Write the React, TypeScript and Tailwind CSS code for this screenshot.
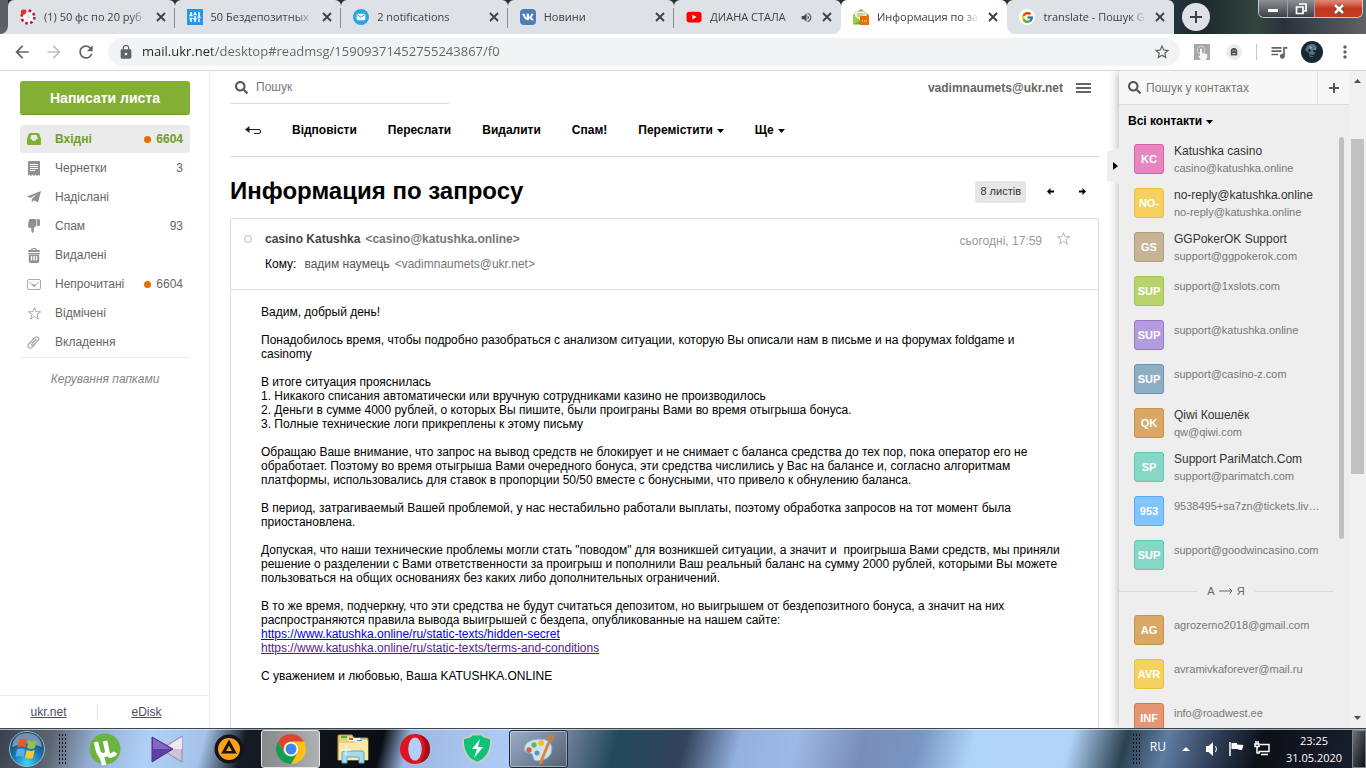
import type { ReactNode } from "react";
import clsx from "clsx";
import { FaSearch, FaVk } from "react-icons/fa";
import { FcGoogle } from "react-icons/fc";
import {
  MdArrowBack,
  MdArrowForward,
  MdLock,
  MdMoreVert,
  MdQueueMusic,
  MdRefresh,
  MdStarBorder,
  MdVolumeUp,
} from "react-icons/md";

type Tab = { title: string; icon: ReactNode; active?: boolean; audio?: boolean; edge?: string };

const tabs: Tab[] = [
  { title: "(1) 50 фс по 20 руб", icon: <ChipIcon /> },
  { title: "50 Бездепозитных", icon: <SlidersIcon /> },
  { title: "2 notifications", icon: <MailBadgeIcon /> },
  {
    title: "Новини",
    icon: (
      <span className="flex size-4 items-center justify-center rounded-sm bg-[#4d7db8] text-white">
        <FaVk size={12} />
      </span>
    ),
  },
  { title: "ДИАНА СТАЛА", icon: <YoutubeIcon />, audio: true, edge: "rounded-br-lg" },
  { title: "Информация по за", icon: <UkrMailIcon />, active: true },
  {
    title: "translate - Пошук G",
    icon: (
      <span className="flex size-4 items-center justify-center rounded-full bg-white">
        <FcGoogle size={13} />
      </span>
    ),
    edge: "rounded-bl-lg",
  },
];

const folders = [
  { label: "Вхідні", count: "6604", dot: true, active: true, icon: <InboxIcon /> },
  { label: "Чернетки", count: "3", icon: <DraftIcon /> },
  { label: "Надіслані", icon: <PlaneIcon /> },
  { label: "Спам", count: "93", icon: <ThumbIcon /> },
  { label: "Видалені", icon: <TrashIcon /> },
  { label: "Непрочитані", count: "6604", dot: true, icon: <UnreadIcon /> },
  { label: "Відмічені", icon: <StarIcon className="size-[15px] text-[#aaabad]" /> },
  { label: "Вкладення", icon: <ClipIcon /> },
];

const contacts = [
  { initials: "KC", name: "Katushka casino", email: "casino@katushka.online", color: "bg-[#e886c0] border-[#dd5cab]" },
  { initials: "NO-", name: "no-reply@katushka.online", email: "no-reply@katushka.online", color: "bg-[#f5d15f] border-[#efc132]" },
  { initials: "GS", name: "GGPokerOK Support", email: "support@ggpokerok.com", color: "bg-[#c7b497] border-[#b39b78]" },
  { initials: "SUP", email: "support@1xslots.com", color: "bg-[#b9d36c] border-[#a3c744]" },
  { initials: "SUP", email: "support@katushka.online", color: "bg-[#b59ddd] border-[#9575ce]" },
  { initials: "SUP", email: "support@casino-z.com", color: "bg-[#8eaec4] border-[#6994b4]" },
  { initials: "QK", name: "Qiwi Кошелёк", email: "qw@qiwi.com", color: "bg-[#d9a866] border-[#cb923f]" },
  { initials: "SP", name: "Support PariMatch.Com", email: "support@parimatch.com", color: "bg-[#86d7c5] border-[#59c9af]" },
  { initials: "953", email: "9538495+sa7zn@tickets.liv…", color: "bg-[#84c4fe] border-[#52acfb]" },
  { initials: "SUP", email: "support@goodwincasino.com", color: "bg-[#86d7c5] border-[#59c9af]" },
];

const moreContacts = [
  { initials: "AG", email: "agrozerno2018@gmail.com", color: "bg-[#d9a866] border-[#cb923f]" },
  { initials: "AVR", email: "avramivkaforever@mail.ru", color: "bg-[#f5d15f] border-[#efc132]" },
  { initials: "INF", email: "info@roadwest.ee", color: "bg-[#e59674] border-[#dc7448]" },
];

const bodyStart = `Вадим, добрый день!

Понадобилось время, чтобы подробно разобраться с анализом ситуации, которую Вы описали нам в письме и на форумах foldgame и
casinomy

В итоге ситуация прояснилась
1. Никакого списания автоматически или вручную сотрудниками казино не производилось
2. Деньги в сумме 4000 рублей, о которых Вы пишите, были проиграны Вами во время отыгрыша бонуса.
3. Полные технические логи прикреплены к этому письму

Обращаю Ваше внимание, что запрос на вывод средств не блокирует и не снимает с баланса средства до тех пор, пока оператор его не
обработает. Поэтому во время отыгрыша Вами очередного бонуса, эти средства числились у Вас на балансе и, согласно алгоритмам
платформы, использовались для ставок в пропорции 50/50 вместе с бонусными, что привело к обнулению баланса.

В период, затрагиваемый Вашей проблемой, у нас нестабильно работали выплаты, поэтому обработка запросов на тот момент была
приостановлена.

Допуская, что наши технические проблемы могли стать "поводом" для возникшей ситуации, а значит и  проигрыша Вами средств, мы приняли
решение о разделении с Вами ответственности за проигрыш и пополнили Ваш реальный баланс на сумму 2000 рублей, которыми Вы можете
пользоваться на общих основаниях без каких либо дополнительных ограничений.

В то же время, подчеркну, что эти средства не будут считаться депозитом, но выигрышем от бездепозитного бонуса, а значит на них
распространяются правила вывода выигрышей с бездепа, опубликованные на нашем сайте:
`;

/* ---------- icons ---------- */

function ChipIcon() {
  return (
    <svg viewBox="0 0 16 16" className="size-4">
      <circle cx="8" cy="8" r="6.4" fill="#fff" stroke="#eee" strokeWidth="2.6" />
      <circle cx="8" cy="8" r="6.4" fill="none" stroke="#b81d35" strokeWidth="2.6" strokeDasharray="2.6 2.4" />
      <path d="M8 5v3l2 1" stroke="#ccc" fill="none" />
      <circle cx="3.4" cy="3" r="2.6" fill="#ed2b23" />
    </svg>
  );
}

function SlidersIcon() {
  return (
    <svg viewBox="0 0 16 16" className="size-4">
      <path fill="#2196f3" d="M0 0h16v16H0z" />
      <path d="M4 3v4M4 9v4M8 3v2M8 7v6M12 3v5M12 10v3M2.4 9.500h3.200M6.400 5.500h3.200M10.400 8.500h3.200M2.400 6.500h3.200M6.400 10h3.200" stroke="#fff" strokeWidth="1.500" />
    </svg>
  );
}

function MailBadgeIcon() {
  return (
    <svg viewBox="0 0 16 16" className="size-4">
      <circle cx="8" cy="8" r="8" fill="#2ca5e0" />
      <rect x="3.700" y="4.800" width="8.600" height="6.500" rx="1" fill="#fff" />
      <path d="m4 5.500 4 2.800 4-2.800" fill="none" stroke="#2ca5e0" />
    </svg>
  );
}

function YoutubeIcon() {
  return (
    <svg viewBox="0 0 16 16" className="size-4">
      <rect x=".5" y="2.800" width="15" height="10.600" rx="2.800" fill="#f00" />
      <path fill="#fff" d="m6.400 5.700 4.200 2.400-4.200 2.400z" />
    </svg>
  );
}

function UkrMailIcon() {
  return (
    <svg viewBox="0 0 16 16" className="size-4">
      <path fill="#7ab32e" d="M0 6 8 0l8 6v9.500H0z" />
      <path fill="#f4f2e4" stroke="#d8d5be" strokeWidth=".5" d="M2 2.500h11.500V10L8 12 2 9z" />
      <path d="M4 5h8M4 7h6" stroke="#9bb46a" />
      <path fill="#9bcf4a" d="m0 6 7 5-7 4.500z" />
      <path fill="#ec6c04" d="M7 7h9v9H7z" />
      <path d="M9 12h1M11 12h1M13 12h1" stroke="#fff" />
    </svg>
  );
}

function InboxIcon() {
  return (
    <svg viewBox="0 0 14 12" className="h-3 w-3.5">
      <path fill="#7cb22e" fillRule="evenodd" d="M3.500 0h7Q12 0 12.500 1.500L14 6v4.500q0 1.500-1.500 1.500h-11Q0 12 0 10.500V6l1.500-4.500Q2 0 3.500 0zM4.300 2 3 6h1.500q.4 2 2.500 2t2.500-2H11L9.700 2z" />
    </svg>
  );
}

function DraftIcon() {
  return (
    <svg viewBox="0 0 12 15" className="ml-px h-[15px] w-3">
      <path fill="#8f9094" d="M1 0h10q1 0 1 1v14l-1.500-1.500L9 15l-1.500-1.500L6 15l-1.500-1.500L3 15l-1.500-1.500L0 15V1q0-1 1-1z" />
      <path d="M2 3.500h8M2 5.500h8M2 7.500h8M2 9.500h5" stroke="#fff" />
    </svg>
  );
}

function PlaneIcon() {
  return (
    <svg viewBox="0 0 14 12" className="h-3 w-3.5">
      <path fill="#8f9094" d="M14 0 0 5.500l3.300 1.600L10 3 4.800 8v3.600l2-2.300L11 11.500z" />
    </svg>
  );
}

function ThumbIcon() {
  return (
    <svg viewBox="0 0 12 14" className="ml-px h-3.5 w-3">
      <path fill="#8f9094" d="M1 .5Q1.500 0 2.500 0H7q1 0 1.500 1v5.500L5.800 9.200Q6 14 4.300 14 3 14 3.400 9H1Q-.4 8.500.2 5zM9.200 0h1.300q1.500 0 1.500 1.500V6q0 1-1 1H9.200z" />
    </svg>
  );
}

function TrashIcon() {
  return (
    <svg viewBox="0 0 12 15" className="ml-px h-[15px] w-3">
      <path fill="#8f9094" d="M3 2Q3 0 6 0t3 2h2q.8 0 .8 1v1H.2V3q0-1 .8-1zM4 2h4q0-1-2-1T4 2zM0 5h12v1H0z" />
      <path fill="#8f9094" fillRule="evenodd" d="M.8 6.500h10.400V13q0 2-2 2H2.800q-2 0-2-2zM2.800 8v4.500h1.400V8zm2.500 0v4.500h1.400V8zm2.500 0v4.500h1.400V8z" />
    </svg>
  );
}

function UnreadIcon() {
  return (
    <svg viewBox="0 0 14 11" className="h-[11px] w-3.5">
      <rect x=".5" y=".5" width="13" height="10" rx="1.500" fill="#fff" stroke="#aaabad" />
      <path d="m2 3 5 4 5-4" fill="none" stroke="#aaabad" />
      <path fill="#8f9094" d="M5 5.500h4L7 8z" />
    </svg>
  );
}

function StarIcon({ className }: { className?: string }) {
  return (
    <svg viewBox="0 0 15 15" className={className}>
      <path fill="none" stroke="currentColor" d="m7.500 1.500 1.500 4.200h4.700L10 8.500l1.400 4.700-3.900-2.800-3.900 2.800L5 8.500 1.300 5.700H6z" />
    </svg>
  );
}

function ClipIcon() {
  return (
    <svg viewBox="0 0 14 14" className="size-3.5">
      <path
        d="M9 4.500 5 8.700q-.8 1.200.1 1.600.8.400 1.500-.3l4.500-4.600q1.400-1.700.1-3Q9.800 1.200 8.200 2.600L2.200 8.500Q0 10.800 1.600 12.500q1.800 1.500 4-.6l2-2"
        fill="none"
        stroke="#aaabad"
        strokeWidth="1.300"
        strokeLinecap="round"
      />
    </svg>
  );
}

function Caret() {
  return (
    <svg viewBox="0 0 7 4" className="ml-1 inline h-1 w-[7px]">
      <path fill="#000" d="M0 0h7L3.500 4z" />
    </svg>
  );
}

function MiniArrow({ className }: { className?: string }) {
  return (
    <svg viewBox="0 0 7 7" className={clsx("size-[7px]", className)}>
      <path fill="#000" d="M0 3.500 3.500 0v2.600H7v1.800H3.500V7z" />
    </svg>
  );
}

/* ---------- browser chrome ---------- */

function TabStrip() {
  return (
    <header className="flex h-[34px] shrink-0 bg-[linear-gradient(90deg,#5b6064_0%,#5b6064_2%,#22343a_4%,#22343a_86%,#1d2a2a_88%,#33453f_92%,#28323a_94%,#606266_100%)]">
      <div className="w-2 shrink-0 bg-[#dee1e6]">
        <div className="h-full rounded-br-lg bg-[#5b6064]" />
      </div>
      {tabs.map((tab, i) => (
        <div key={tab.title} className="min-w-0 flex-1 bg-[linear-gradient(#22343a_50%,#fff_50%)]">
          <div
            className={clsx(
              "relative flex h-full items-center rounded-t-md pr-2 pl-3",
              tab.active ? "bg-white" : "bg-[#dee1e6]",
              tab.edge,
            )}
          >
            <span className="mr-2 shrink-0">{tab.icon}</span>
            <span className="min-w-0 flex-1 overflow-hidden [mask-image:linear-gradient(90deg,#000_84%,transparent)] font-['Open_Sans',sans-serif] text-[11px] whitespace-nowrap text-[#3c4043]">
              {tab.title}
            </span>
            {tab.audio && <MdVolumeUp size={13} className="ml-1 shrink-0 text-[#45494d]" />}
            <button type="button" aria-label="Закрити" className="ml-2 shrink-0">
              <svg viewBox="0 0 12 12" className="size-3">
                <path d="m2 2 8 8M10 2l-8 8" stroke="#3c4043" strokeWidth="1.800" />
              </svg>
            </button>
            {i < 4 && <span className="absolute top-2 right-0 h-5 w-px bg-[#888c91]" />}
          </div>
        </div>
      ))}
      <div className="flex w-48 shrink-0 items-start justify-between">
        <div className="flex h-full items-center">
          <button type="button" aria-label="Нова вкладка" className="ml-2 flex size-7 items-center justify-center rounded-full bg-[#dee1e6]">
            <svg viewBox="0 0 12 12" className="size-3">
              <path d="M6 0v12M0 6h12" stroke="#3c4043" strokeWidth="2" />
            </svg>
          </button>
        </div>
        <div className="mr-[3px] flex h-[18px] overflow-hidden rounded-b-md border border-t-0 border-[#c5cbd0]">
          <button type="button" aria-label="Згорнути" className="flex w-[29px] items-center justify-center border-r border-[#9aa0a5] bg-linear-to-b from-[#8b9094] to-[#3c4348]">
            <span className="mt-1 h-[3px] w-2.5 bg-white" />
          </button>
          <button type="button" aria-label="Розгорнути" className="flex w-[27px] items-center justify-center border-r border-[#9aa0a5] bg-linear-to-b from-[#8b9094] to-[#3c4348]">
            <svg viewBox="0 0 12 12" className="size-3">
              <path d="M4 1h7v7H9M1.500 4h6.500v6.500H1.500z" fill="none" stroke="#fff" strokeWidth="1.700" />
            </svg>
          </button>
          <button type="button" aria-label="Закрити вікно" className="flex w-[47px] items-center justify-center bg-linear-to-b from-[#dd8a78] via-[#c4361b] to-[#c23c22]">
            <svg viewBox="0 0 12 10" className="h-2.5 w-3">
              <path d="m2 1 8 8M10 1 2 9" stroke="#444" strokeWidth="4" />
              <path d="m2 1 8 8M10 1 2 9" stroke="#fff" strokeWidth="2.600" />
            </svg>
          </button>
        </div>
      </div>
    </header>
  );
}

function AddressBar() {
  return (
    <div className="flex h-[37px] shrink-0 items-center border-b border-[#d6d7dc] bg-white pr-[11px] pl-3 text-[#5f6368]">
      <button type="button" aria-label="Назад"><MdArrowBack size={20} /></button>
      <button type="button" aria-label="Вперед" className="ml-3 text-[#bdc1c6]"><MdArrowForward size={20} /></button>
      <button type="button" aria-label="Оновити" className="ml-3"><MdRefresh size={20} /></button>
      <div className="ml-3 flex h-7 flex-1 items-center rounded-full bg-[#f1f3f4] pr-[9px] pl-2.5">
        <MdLock size={16} />
        <input
          aria-label="Адреса"
          defaultValue="mail.ukr.net/desktop#readmsg/15909371452755243867/f0"
          className="ml-2 flex-1 bg-[linear-gradient(90deg,#202124_70px,#5f6368_70px)] bg-clip-text font-['Open_Sans',sans-serif] text-[13px] text-transparent outline-none"
        />
        <MdStarBorder size={18} />
      </div>
      <div className="ml-3.5 flex size-4 items-center justify-center bg-[#a6a7a9]">
        <svg viewBox="0 0 16 16" className="size-4">
          <circle cx="7" cy="6" r="4" fill="none" stroke="#d5d6d8" />
          <path fill="#f3f6fa" d="M6 5q1-1 2 0v4l5 1q1 1 0 4l-1 2H7l-3-4q0-1 2 0z" />
        </svg>
      </div>
      <div className="ml-4 flex size-4 items-center justify-center rounded-full bg-[#ececec]">
        <svg viewBox="0 0 10 12" className="h-2.5 w-2">
          <path fill="#4b4b4b" d="M1 5q0-4 4-4t4 4v5q-2 1-4 0-2 1-4 0z" />
          <path d="M3 4.500h1.500M6 4.500h1.500M3 8h4" stroke="#fff" />
        </svg>
      </div>
      <span className="ml-3.5 h-4 w-px bg-[#c6c8ca]" />
      <MdQueueMusic size={20} className="ml-3" />
      <svg viewBox="0 0 22 22" className="ml-3 size-[22px]">
        <circle cx="11" cy="11" r="11" fill="#182833" />
        <path fill="#58717f" d="M6 5q6-5 10 1l-2 6-2 4H9l-1-4-4-3z" />
        <path fill="#9ab0ba" d="m8 5 3 1-1 3zM14 7l1 2-3 2z" />
        <circle cx="8.500" cy="9.500" r="1.300" fill="#0c161d" />
        <circle cx="13.500" cy="10" r="1.300" fill="#0c161d" />
        <path d="m9 14 4 .5" stroke="#0c161d" />
      </svg>
      <button type="button" aria-label="Меню" className="ml-3"><MdMoreVert size={20} /></button>
    </div>
  );
}

/* ---------- mail ---------- */

function Sidebar() {
  return (
    <aside className="flex w-[210px] shrink-0 flex-col border-r border-[#efefef]">
      <div className="flex-1 pt-2.5 pr-[19px] pl-5">
        <button type="button" className="h-[34px] w-full rounded-[3px] border-b border-[#6b9c22] bg-[#83b034] text-sm font-bold text-white">
          Написати листа
        </button>
        <nav className="mt-2.5 flex flex-col gap-px border-b border-[#ededed] pb-px">
          {folders.map((f) => (
            <a
              key={f.label}
              href="#"
              className={clsx(
                "flex h-7 items-center rounded-[3px] px-[7px] text-xs",
                f.active ? "bg-[#ebebeb] font-bold text-[#6f9e28]" : "text-[#666]",
              )}
            >
              <span className="flex w-7 shrink-0">{f.icon}</span>
              <span className="flex-1">{f.label}</span>
              {f.dot && <span className="mr-[5px] size-[7px] rounded-full bg-[#e96e00]" />}
              {f.count}
            </a>
          ))}
        </nav>
        <a href="#" className="mt-[13px] block text-center text-xs text-[#85868a] italic">
          Керування папками
        </a>
      </div>
      <div className="flex h-[33px] items-center border-t border-[#ededed] text-xs text-[#4c4e63]">
        <a href="#" className="flex-1 text-center underline">ukr.net</a>
        <span className="h-3.5 w-px bg-[#e4e4e4]" />
        <a href="#" className="flex-1 pr-3.5 text-center underline">eDisk</a>
      </div>
    </aside>
  );
}

function Message() {
  return (
    <article className="flex flex-1 flex-col rounded-t-[3px] border border-b-0 border-[#dcdcdc] text-xs">
      <div className="flex h-[71px] shrink-0 border-b border-[#dcdcdc] pt-3 pr-[27px] pl-[13px]">
        <span className="mt-1 mr-[13px] size-2 rounded-full border border-[#bbb]" />
        <div className="flex-1">
          <p className="font-bold text-[#777]">
            <span className="mr-[5px] text-[#444]">casino Katushka</span>
            &lt;casino@katushka.online&gt;
          </p>
          <p className="mt-[9px] text-[#777]">
            <span className="mr-2 text-black">Кому:</span>
            <span className="mr-[5px] text-[#555]">вадим наумець</span>
            &lt;vadimnaumets@ukr.net&gt;
          </p>
        </div>
        <time className="mt-0.5 mr-3.5 text-[#999]">сьогодні, 17:59</time>
        <StarIcon className="size-[15px] text-[#b5b5b5]" />
      </div>
      <div className="min-h-0 flex-1 pt-[15px] pr-8 pl-[30px] leading-[14px] whitespace-pre text-black">
        {bodyStart}
        <a href="#" className="text-[#0000ee] underline">https://www.katushka.online/ru/static-texts/hidden-secret</a>
        {"\n"}
        <a href="#" className="text-[#551a8b] underline">https://www.katushka.online/ru/static-texts/terms-and-conditions</a>
        {"\n\nС уважением и любовью, Ваша KATUSHKA.ONLINE"}
      </div>
    </article>
  );
}

function Reader() {
  return (
    <main className="flex min-w-0 flex-1 flex-col overflow-hidden px-5">
      <div className="flex h-[33px] shrink-0 items-center justify-between">
        <div className="flex h-full w-[219px] items-center border-b border-[#dcdcdc] pl-[5px] text-[#555]">
          <FaSearch size={13} />
          <input type="search" aria-label="Пошук" placeholder="Пошук" className="ml-2 w-40 text-xs outline-none placeholder:text-[#777]" />
        </div>
        <div className="flex items-center pr-2 text-xs font-bold text-[#666]">
          <span>vadimnaumets@ukr.net</span>
          <button type="button" aria-label="Меню пошти" className="ml-[13px]">
            <svg viewBox="0 0 15 10" className="h-2.5 w-[15px]">
              <path d="M0 1h15M0 5h15M0 9h15" stroke="#666" strokeWidth="2" />
            </svg>
          </button>
        </div>
      </div>
      <div className="flex h-[53px] shrink-0 items-center gap-[31px] border-b border-[#d4d4d4] pl-[15px] text-xs font-bold text-black">
        <button type="button" aria-label="Назад до списку">
          <svg viewBox="0 0 16 8" className="h-2 w-4">
            <path d="M3 3.500h11q1.500 0 1.500 1.500v1q0 1.500-1.500 1.500H9" fill="none" stroke="#222" />
            <path fill="#222" d="M0 3.500 4.500 0v7z" />
          </svg>
        </button>
        <button type="button">Відповісти</button>
        <button type="button">Переслати</button>
        <button type="button">Видалити</button>
        <button type="button">Спам!</button>
        <button type="button">Перемістити<Caret /></button>
        <button type="button">Ще<Caret /></button>
      </div>
      <div className="flex h-[61px] shrink-0 items-center justify-between pt-1.5">
        <h1 className="text-2xl font-bold text-black">Информация по запросу</h1>
        <div className="flex items-center pt-0.5 pr-[13px]">
          <button type="button" className="h-[22px] rounded-[3px] bg-[#e6e6e6] px-[5px] text-[11px] text-[#333]">8 листів</button>
          <button type="button" aria-label="Попередній" className="ml-[21px]"><MiniArrow /></button>
          <button type="button" aria-label="Наступний" className="ml-[25px]"><MiniArrow className="rotate-180" /></button>
        </div>
      </div>
      <Message />
    </main>
  );
}

function Contact({ initials, name, email, color }: { initials: string; name?: string; email: string; color: string }) {
  return (
    <li className="flex h-11">
      <span className={clsx("flex size-[30px] shrink-0 items-center justify-center rounded-[3px] border text-[11px] font-bold text-white", color)}>
        {initials}
      </span>
      <div className="ml-2.5 w-[146px] whitespace-nowrap">
        {name && <p className="text-xs leading-[15px] text-[#333]">{name}</p>}
        <p className={clsx("text-[11px] leading-4 text-[#777]", name ? "mt-px" : "mt-0.5")}>{email}</p>
      </div>
    </li>
  );
}

function Contacts() {
  return (
    <aside className="relative flex w-[230px] shrink-0 flex-col bg-[#eee] shadow-[0_0_10px_rgba(0,0,0,0.35)]">
      <button type="button" aria-label="Сховати контакти" className="absolute top-[77px] -left-3 flex h-9 w-3 items-center justify-end bg-[#eee] pr-px [clip-path:polygon(0_10%,100%_0,100%_100%,0_90%)]">
        <svg viewBox="0 0 5 8" className="h-2 w-[5px]">
          <path d="M0 0v8l5-4z" />
        </svg>
      </button>
      <div className="flex h-[34px] shrink-0 border-b border-[#dadada] bg-[#f7f7f7]">
        <div className="flex flex-1 items-center pl-[9px] text-[#555]">
          <FaSearch size={13} className="shrink-0" />
          <input type="search" aria-label="Пошук у контактах" placeholder="Пошук у контактах" className="ml-[5px] w-40 text-xs outline-none placeholder:text-[#777]" />
        </div>
        <button type="button" aria-label="Додати контакт" className="flex w-8 items-center justify-center border-l border-[#dadada]">
          <svg viewBox="0 0 10 10" className="size-2.5">
            <path d="M5 0v10M0 5h10" stroke="#555" strokeWidth="2" />
          </svg>
        </button>
      </div>
      <div className="flex min-h-0 flex-1">
        <div className="flex-1 overflow-hidden">
          <button type="button" className="mt-2 ml-[9px] block text-xs font-bold text-black">Всі контакти<Caret /></button>
          <ul className="mt-[15px] pl-[15px]">
            {contacts.map((c) => <Contact key={c.email} {...c} />)}
          </ul>
          <div className="mt-[-3px] mb-3.5 flex h-5 items-center pr-1.5 text-[11px] text-[#666]">
            <span className="h-px flex-1 bg-[#d9d9d9]" />
            <span className="mx-2.5 flex items-center">
              А
              <svg viewBox="0 0 14 6" className="mx-1 h-1.5 w-3.5">
                <path d="M0 3h13M10.500.5 13 3l-2.500 2.500" fill="none" stroke="#666" />
              </svg>
              Я
            </span>
            <span className="h-px flex-1 bg-[#d9d9d9]" />
          </div>
          <ul className="pl-[15px]">
            {moreContacts.map((c) => <Contact key={c.email} {...c} />)}
          </ul>
        </div>
        <div className="w-2.5 shrink-0 pt-8">
          <div className="h-[68%] w-[5px] rounded-full bg-[#c0c0c0]" />
        </div>
      </div>
    </aside>
  );
}

function PageScrollbar() {
  return (
    <div className="relative flex w-[17px] shrink-0 flex-col items-center bg-[#f1f1f1]">
      <svg viewBox="0 0 7 4" className="mt-2 h-1 w-[7px] shrink-0">
        <path fill="#505050" d="M0 4h7L3.500 0z" />
      </svg>
      <div className="mt-14 h-[51%] w-[13px] bg-[#c1c1c1]" />
      <svg viewBox="0 0 7 4" className="mt-auto mb-2 h-1 w-[7px] shrink-0">
        <path fill="#505050" d="M0 0h7L3.500 4z" />
      </svg>
    </div>
  );
}

/* ---------- taskbar ---------- */

function Grip() {
  return <div className="h-[31px] w-2 shrink-0 bg-[radial-gradient(circle,#111_1px,transparent_1px)] bg-size-[3px_4px]" />;
}

function StartOrb() {
  return (
    <svg viewBox="0 0 38 38" className="size-[38px]">
      <defs>
        <radialGradient id="orb" cx=".5" cy=".9" r=".8">
          <stop offset="0" stopColor="#3fd6f7" />
          <stop offset=".5" stopColor="#1c78b4" />
          <stop offset="1" stopColor="#1a3f66" />
        </radialGradient>
      </defs>
      <circle cx="19" cy="19" r="17.500" fill="url(#orb)" stroke="#9bbdd2" />
      <path fill="#b9d4e6" opacity=".55" d="M4 17Q6 3 19 3t15 14Q19 10 4 17z" />
      <path fill="#e8592a" d="M11 10q4-2.500 8-.5l-1.500 8q-4-2-8 0z" />
      <path fill="#8fc543" d="M20.500 10.500q4 2 8 0L27 18q-4 2-8-.3z" />
      <path fill="#57b1e8" d="M9 19.500q4-2 8 0l-1.500 7.500q-4-2-8 0z" />
      <path fill="#fcc62d" d="M18.700 20q4 2 8 0L25 27.800q-4 2-8-.3z" />
    </svg>
  );
}

function TorrentIcon() {
  return (
    <svg viewBox="0 0 32 32" className="size-8">
      <circle cx="16" cy="16" r="15.500" fill="#6db33f" />
      <path d="M7 9q1 5 2.500 10 1.500 4 6 3 3.500-1 2.500-5L16 8M18 18q1 5 4 4.500 3-.5 4.500-3M10 20q4 5 5 12" fill="none" stroke="#fff" strokeWidth="4.500" />
    </svg>
  );
}

function KmIcon() {
  return (
    <svg viewBox="0 0 32 28" className="h-7 w-8">
      <path fill="#cfc4d8" stroke="#93879f" d="M31 1v26L10 14z" />
      <path fill="#eee8f2" d="M31 2v12H12z" />
      <path fill="#5f3fa3" stroke="#4b2f85" d="m1 2 21 12L1 27z" />
      <path fill="#8467c2" d="m2 3 18 11H2z" />
    </svg>
  );
}

function AimpIcon() {
  return (
    <svg viewBox="0 0 30 30" className="size-[30px]">
      <circle cx="15" cy="15" r="14.500" fill="#141414" />
      <circle cx="15" cy="15" r="11" fill="#f9a11b" />
      <path fill="none" stroke="#141414" strokeWidth="3" d="m15 8.500 5.500 10h-11z" />
      <path d="M7.500 20.500h15" stroke="#f9a11b" strokeWidth="2" />
    </svg>
  );
}

function ChromeIcon() {
  return (
    <svg viewBox="0 0 30 30" className="size-[30px]">
      <circle cx="15" cy="15" r="15" fill="#fbc116" />
      <path fill="#db4437" d="M2 7.500A15 15 0 0 1 28 7.500H15A7.500 7.500 0 0 0 8.500 18.700z" />
      <path fill="#0f9d58" d="M2 7.500 8.500 18.700A7.500 7.500 0 0 0 21.500 18.700L15 30A15 15 0 0 1 2 7.500z" />
      <circle cx="15" cy="15" r="7" fill="#fff" />
      <circle cx="15" cy="15" r="5.500" fill="#4285f4" />
    </svg>
  );
}

function ExplorerIcon() {
  return (
    <svg viewBox="0 0 32 30" className="h-[30px] w-8">
      <path fill="#e8cf77" stroke="#b69a45" d="M1 2q0-1 1-1h13l2 3h13q1 0 1 1v21H1z" />
      <path fill="#3fb54a" d="M4 2h6v2H4z" />
      <path fill="#fff" d="M11 4h12v3H11zM18 6h12v3H18z" />
      <path fill="#d7553a" d="M12 4h4v2h-4z" />
      <path fill="#3c8fd8" d="M20 6h5v2h-5z" />
      <path fill="#f9e8a5" d="M2 9h15l3-2h11v19H2z" />
      <path fill="#a7dbef" stroke="#5ba7c8" d="M5 29V19q0-2 2-2h18q2 0 2 2v10h-5v-6H10v6z" />
      <path d="M9 11v10M4 16h10" stroke="#fff" />
    </svg>
  );
}

function OperaIcon() {
  return (
    <svg viewBox="0 0 30 30" className="size-[30px]">
      <ellipse cx="15" cy="15" rx="15" ry="15" fill="#e0121f" />
      <path fill="#a50d18" d="M20 1q10 3 10 14T20 29q5-5 5-14T20 1z" />
      <ellipse cx="15" cy="15" rx="6.800" ry="11.500" fill="#b2cff5" />
    </svg>
  );
}

function ShieldIcon() {
  return (
    <svg viewBox="0 0 30 31" className="h-[31px] w-[30px]">
      <path fill="#10c277" stroke="#c5cdd0" strokeWidth="2" d="M6 4q3 0 4-2.500h10Q21 4 24 4l5 1.500Q30 24 15 30 0 24 1 5.500z" />
      <path fill="#fff" d="m18 6-8 10h5l-3 9 9-11h-5z" />
    </svg>
  );
}

function PaintIcon() {
  return (
    <svg viewBox="0 0 32 32" className="size-8">
      <path fill="#cbe5f2" stroke="#7eafca" d="M15 6q13-1 14 9 0 12-15 13-4 0-4-4t-4-4-5-4Q2 7 15 6z" />
      <circle cx="14" cy="20" r="2.500" fill="#6a8fae" />
      <circle cx="6" cy="17" r="2.700" fill="#e5593f" />
      <circle cx="11" cy="12" r="2.700" fill="#6cbb48" />
      <circle cx="18" cy="10" r="3" fill="#f6bd30" />
      <path d="m26 9-9 22" stroke="#e38530" strokeWidth="3" />
      <path fill="#b78150" d="M24 2q4-3 8 2l-3 5-5-2z" />
    </svg>
  );
}

function TaskButton({ label, state, children }: { label: string; state?: "active" | "open"; children: ReactNode }) {
  return (
    <button
      type="button"
      aria-label={label}
      className={clsx(
        "flex h-[38px] w-[59px] items-center justify-center rounded-[3px] border",
        !state && "border-transparent",
        state === "active" && "border-[#e4e6e8] bg-linear-to-r from-[#86898b] to-[#aeb0b2]",
        state === "open" && "border-[#1f2733] bg-linear-to-br from-[#95a3b8]/80 to-[#4d5a6c]/80 inset-ring inset-ring-white/40",
      )}
    >
      {children}
    </button>
  );
}

function Taskbar() {
  return (
    <footer className="flex h-10 shrink-0 items-center border-t border-[#38464e] bg-[linear-gradient(105deg,#39404d_0%,#5d6673_4%,#93acd0_7%,#b0d0f8_11%,#a5c3ea_15%,#151b26_18%,#0a0d13_28%,#9db9e4_30%,#adcdf7_38%,#62758f_42%,#23495d_45%,#33435a_50%,#93b0df_54%,#9db9e6_58%,#7a8db8_63%,#7796c2_67%,#b0d4f8_71%,#b2d3f8_78%,#2b4250_82%,#5f7ca2_85%,#2a3850_89%,#0c1017_92%,#1a2030_100%)] font-['Open_Sans',sans-serif] inset-shadow-[0_1px_0_rgba(255,255,255,0.6)]">
      <button type="button" aria-label="Пуск" className="ml-2"><StartOrb /></button>
      <div className="ml-3"><Grip /></div>
      <div className="ml-[9px] flex gap-[3px]">
        <TaskButton label="uTorrent"><TorrentIcon /></TaskButton>
        <TaskButton label="KMPlayer"><KmIcon /></TaskButton>
        <TaskButton label="AIMP"><AimpIcon /></TaskButton>
        <TaskButton label="Chrome" state="active"><ChromeIcon /></TaskButton>
        <TaskButton label="Провідник"><ExplorerIcon /></TaskButton>
        <TaskButton label="Opera"><OperaIcon /></TaskButton>
        <TaskButton label="Shield"><ShieldIcon /></TaskButton>
        <TaskButton label="Paint" state="open"><PaintIcon /></TaskButton>
      </div>
      <div className="ml-auto flex items-center text-white">
        <Grip />
        <span className="ml-2.5 pb-1 text-xs">RU</span>
        <svg viewBox="0 0 8 4" className="ml-4 h-1 w-2">
          <path fill="#fff" d="M0 4h8L4 0z" />
        </svg>
        <svg viewBox="0 0 13 14" className="ml-4 h-3.5 w-[13px]">
          <path fill="#fff" d="M0 4h2.500L7 0v14l-4.500-4H0z" />
          <path d="M9.500 4q2 3 0 6" fill="none" stroke="#fff" />
        </svg>
        <svg viewBox="0 0 15 14" className="ml-2.5 h-3.5 w-[15px]">
          <path d="M1 0v14" stroke="#fff" strokeWidth="1.500" />
          <path fill="#fff" d="M2.500 1H8v1.500l6.500.5-1.500 5-4-.5V7H2.500z" />
        </svg>
        <svg viewBox="0 0 16 15" className="ml-2.5 h-[15px] w-4">
          <path d="M6 3.500h9v7H4.500M2 0v3M4 0v3M1 3h4v2.500H1zM3 6v6h3M7 13.500h7" fill="none" stroke="#fff" strokeWidth="1.500" />
        </svg>
        <div className="mr-2 ml-3.5 w-[60px] text-center text-[11px] leading-[17px]">
          <p>23:25</p>
          <p>31.05.2020</p>
        </div>
        <button type="button" aria-label="Робочий стіл" className="h-[38px] w-3.5 border border-[#7d828a] bg-linear-to-br from-[#6f7478] to-[#0c0f14]" />
      </div>
    </footer>
  );
}

export default function App() {
  return (
    <div className="flex h-screen flex-col overflow-hidden bg-white font-['Liberation_Sans',Arial,sans-serif]">
      <TabStrip />
      <AddressBar />
      <div className="flex min-h-0 flex-1 overflow-hidden">
        <Sidebar />
        <Reader />
        <Contacts />
        <PageScrollbar />
      </div>
      <Taskbar />
    </div>
  );
}
